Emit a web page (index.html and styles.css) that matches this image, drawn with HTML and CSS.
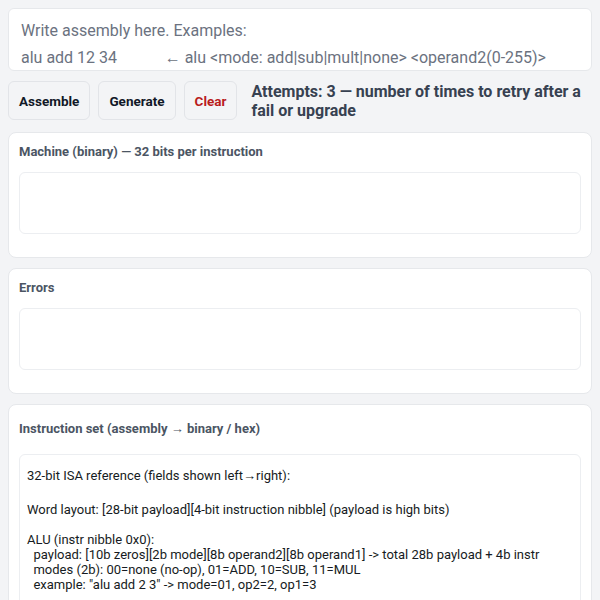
FILE: index.html
```html
<!DOCTYPE html>
<html lang="en">
<head>
<meta charset="utf-8">
<title>Assembler</title>
<link rel="stylesheet" href="styles.css">
</head>
<body>
<main class="page">
  <textarea class="source" placeholder="Write assembly here. Examples:&#10;alu add 12 34            ← alu &lt;mode: add|sub|mult|none&gt; &lt;operand2(0-255)&gt; &lt;operand1(0-255)&gt;&#10;alu sub 5 1"></textarea>

  <div class="toolbar">
    <button class="btn">Assemble</button>
    <button class="btn">Generate</button>
    <button class="btn btn-danger">Clear</button>
    <div class="attempts">Attempts: 3 — number of times to retry after a fail or upgrade</div>
  </div>

  <section class="panel">
    <h2 class="panel-title">Machine (binary) — 32 bits per instruction</h2>
    <div class="box"></div>
  </section>

  <section class="panel">
    <h2 class="panel-title">Errors</h2>
    <div class="box"></div>
  </section>

  <section class="panel panel-ref">
    <h2 class="panel-title">Instruction set (assembly → binary / hex)</h2>
    <div class="box box-ref">
      <p class="ref-line ref-first">32-bit ISA reference (fields shown left→right):</p>
      <p class="ref-line ref-second">Word layout: [28-bit payload][4-bit instruction nibble] (payload is high bits)</p>
      <p class="ref-line">ALU (instr nibble 0x0):
  payload: [10b zeros][2b mode][8b operand2][8b operand1] -&gt; total 28b payload + 4b instr
  modes (2b): 00=none (no-op), 01=ADD, 10=SUB, 11=MUL
  example: "alu add 2 3" -&gt; mode=01, op2=2, op1=3</p>
    </div>
  </section>
</main>
</body>
</html>
```

FILE: styles.css
```css
html, body {
  margin: 0;
  padding: 0;
}

body {
  background: #f3f4f6;
  font-family: Roboto, "Noto Sans", sans-serif;
  color: #1f2937;
  overflow: hidden;
}

.page {
  padding: 8px;
}

.source {
  display: block;
  box-sizing: border-box;
  width: 100%;
  height: 63px;
  margin: 0;
  padding: 8px 12px;
  border: 1px solid #e6e8eb;
  border-radius: 6px;
  background: #fff;
  font-family: Roboto, sans-serif;
  font-size: 16px;
  line-height: 27px;
  color: #1f2937;
  resize: none;
  overflow: hidden;
  outline: none;
}

.source::placeholder {
  color: #6b7280;
  opacity: 1;
}

.toolbar {
  display: flex;
  align-items: flex-start;
  gap: 8px;
  margin-top: 10px;
}

.btn {
  box-sizing: border-box;
  height: 39px;
  padding: 0 10px;
  border: 1px solid #e2e4e8;
  border-radius: 6px;
  background: #f3f4f6;
  font-family: Roboto, sans-serif;
  font-size: 13.5px;
  font-weight: 700;
  color: #111827;
}

.btn-danger {
  color: #b91c1c;
}

.attempts {
  margin-left: 6px;
  padding-top: 1px;
  font-size: 16px;
  line-height: 19px;
  font-weight: 700;
  color: #374151;
}

.panel {
  margin-top: 10px;
  padding: 10px 10px 23px;
  background: #fff;
  border: 1px solid #e6e8eb;
  border-radius: 8px;
}

.toolbar + .panel {
  margin-top: 12px;
}

.panel-title {
  margin: 0 0 12px;
  font-size: 13px;
  line-height: 17px;
  font-weight: 700;
  color: #4b5563;
}

.panel-ref {
  padding-top: 15px;
}

.panel-ref .panel-title {
  margin-bottom: 17px;
}

.box {
  height: 62px;
  box-sizing: border-box;
  border: 1px solid #eceef1;
  border-radius: 6px;
  background: #fff;
}

.box-ref {
  height: auto;
  padding: 13px 7px 20px;
}

.ref-line {
  margin: 0;
  font-size: 13px;
  line-height: 15px;
  color: #161b22;
  white-space: pre-wrap;
}

.ref-first {
  margin-bottom: 19px;
}

.ref-second {
  margin-bottom: 15px;
}
```
